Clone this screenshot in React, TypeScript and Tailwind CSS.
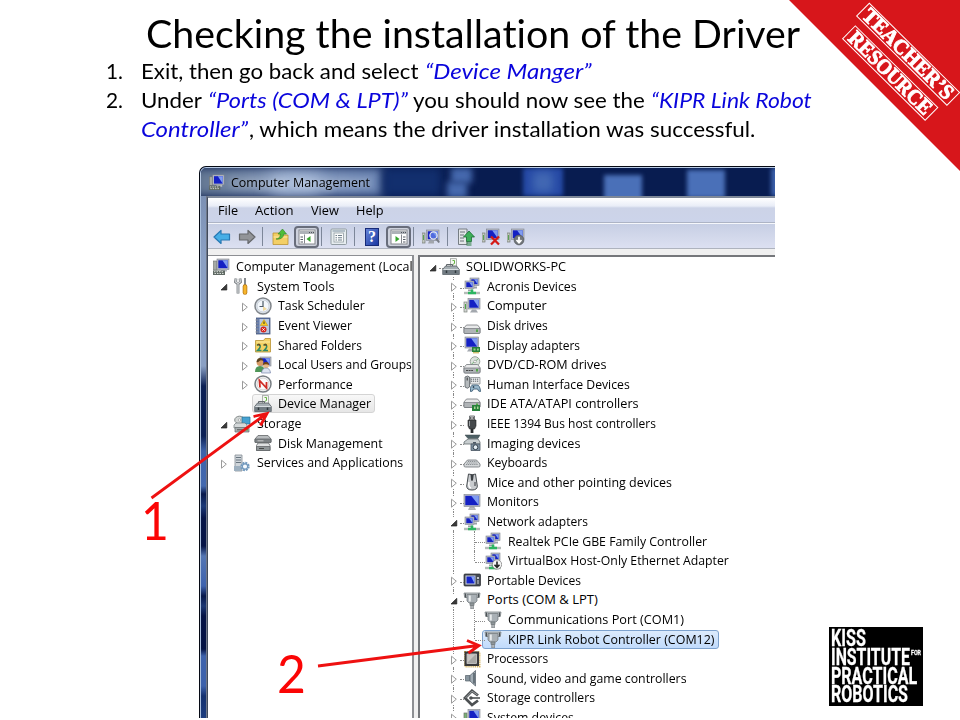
import React, { useLayoutEffect, useRef, useState } from "react";

/* Text squeezed or stretched horizontally so it occupies exactly `w` pixels. */
function Fit({ w, className = "", children }: { w: number; className?: string; children: React.ReactNode }) {
  const ref = useRef<HTMLSpanElement>(null);
  const [scale, setScale] = useState(1);
  useLayoutEffect(() => {
    if (ref.current) setScale(w / ref.current.offsetWidth);
  }, [w]);
  return (
    <span className={`inline-block shrink-0 ${className}`} style={{ width: w }}>
      <span ref={ref} className="inline-block origin-left whitespace-nowrap" style={{ transform: `scaleX(${scale})` }}>
        {children}
      </span>
    </span>
  );
}

/* ---------- icons, all on an 18x18 grid ---------- */

const Screen = ({ x, y, w, h }: { x: number; y: number; w: number; h: number }) => (
  <g>
    <rect x={x} y={y} width={w} height={h} fill="#b9bdc6" stroke="#7d828c" strokeWidth=".6" />
    <rect x={x + 1.3} y={y + 1.3} width={w - 2.6} height={h - 2.6} fill="#1420c4" />
    <path d={`M${x + w - 1.3} ${y + 1.3}V${y + h - 1.3}L${x + w * 0.45} ${y + 1.3}Z`} fill="#7f9cf0" />
  </g>
);

const Port = () => (
  <g stroke="#6f7579" strokeWidth=".7">
    <path d="M1 2h16l-.7 4.500H1.700Z" fill="#c3c8cb" />
    <path d="M4 3.500h10v6.500l-2 2H6l-2-2Z" fill="#a9b0b5" />
    <path d="M5.800 4.500h2v6h-2Z" fill="#e8ebec" stroke="none" />
    <path d="M7 12h4v2.500H7Z" fill="#8e9599" />
    <path d="M7.800 14.500h2.600V18H7.800Z" fill="#b8bdc0" />
    <path d="M2.500 2.500v4M15.500 2.500v4" stroke="#4c5256" strokeWidth="1.200" />
  </g>
);

const Net = () => (
  <g>
    <Screen x={7} y={1} w={9} h={7.5} />
    <Screen x={2} y={4} w={9} h={7.5} />
    <path d="M5 12.500h5v1.500H5ZM11 9.500h3v2h-3Z" fill="#9ba0a8" />
    <path d="M1 16h16" stroke="#b5bcb8" strokeWidth="2.400" />
    <path d="M5 16h8M9 12.500V16" stroke="#2cb561" strokeWidth="2.600" />
  </g>
);

const DiskBody = ({ y = 8 }: { y?: number }) => (
  <g>
    <path d={`M1 ${y + 3}l2.500-3h11l2.500 3v4.500q0 1-1 1H2q-1 0-1-1Z`} fill="#e8e9ea" stroke="#73777b" strokeWidth=".8" />
    <path d={`M1 ${y + 3.5}h16v4q0 1-1 1H2q-1 0-1-1Z`} fill="#b0b4b7" stroke="#73777b" strokeWidth=".7" />
    <rect x="13" y={y + 4.5} width="2" height="2.500" fill="#52a846" />
  </g>
);

const DevMgr = () => (
  <g>
    <rect x="8.500" y=".7" width="6" height="9" fill="#f5f7f3" stroke="#8d938e" strokeWidth=".7" />
    <path d="M10.500 2.500h2v3l-2 1" stroke="#65b343" fill="none" />
    <path d="M4.500 8.500V6.500h6v2" stroke="#62686c" fill="none" />
    <path d="M.7 11.500l2.800-3.500h11l2.800 3.500v5H.7Z" fill="#a5adb2" stroke="#555d63" strokeWidth=".8" />
    <path d="M1 12h16v4.200H1Z" fill="#727c83" />
    <path d="M1.500 11.500h15" stroke="#d9dee1" />
    <path d="M4.500 12.500v2.500M13.500 12.500v2.500" stroke="#30383d" strokeWidth="1.500" />
  </g>
);

const Mgmt = () => (
  <g>
    <rect x="1.500" y="3" width="3.500" height="9" fill="#a5aaa5" stroke="#6b6f6b" strokeWidth=".6" />
    <Screen x={5} y={1} w={12} h={10.5} />
    <path d="M9 11.500h6v2H9Z" fill="#b5b9bf" />
    <path d="M1 12.500h12v4.500H1Z" fill="#5f6963" />
    <path d="M2 13.700h10M2.500 15.500h9" stroke="#d6dbd6" strokeDasharray="1.500 1" />
  </g>
);

const ICONS: Record<string, React.ReactNode> = {
  mgmt: <Mgmt />,
  devmgr: <DevMgr />,
  net: <Net />,
  netoff: (
    <g>
      <Net />
      <circle cx="13" cy="12.500" r="4.700" fill="#f4f4f4" stroke="#777" strokeWidth=".7" />
      <path d="M13 9.500v5.500M10.500 12.800l2.500 2.500 2.500-2.500" stroke="#222" strokeWidth="1.600" fill="none" />
    </g>
  ),
  port: <Port />,
  tools: (
    <g fill="none">
      <path d="M3 1.500L2.500 5l2.500 2 2.500-2L7 1.500M5 7v9.500" stroke="#777c80" strokeWidth="2.800" />
      <path d="M3 1.800L2.700 5 5 6.500 7.300 5 7 1.800M5 7v9" stroke="#d9dcde" strokeWidth="1.200" />
      <path d="M12 1v8" stroke="#85898d" strokeWidth="2" />
      <path d="M12 9.500v6" stroke="#b87812" strokeWidth="4.600" strokeLinecap="round" />
      <path d="M12 9.500v6" stroke="#f6b52c" strokeWidth="3" strokeLinecap="round" />
    </g>
  ),
  clock: (
    <g>
      <circle cx="9" cy="9" r="8" fill="#dfe6ee" stroke="#80858a" strokeWidth="1.500" />
      <circle cx="9" cy="9" r="6" fill="#f3f7fb" stroke="#b9c0c8" strokeWidth=".6" />
      <path d="M9 9v5l4-2Z" fill="#efd9a0" />
      <path d="M9 4v5.500H5.500" stroke="#4e5a66" fill="none" strokeWidth="1.200" />
    </g>
  ),
  event: (
    <g>
      <rect x="2.500" y="1" width="13.500" height="16" fill="#6079ab" stroke="#46587e" strokeWidth=".8" />
      <rect x="5.500" y="2" width="9.500" height="14" fill="#bac8df" />
      <path d="M1.500 3h3M1.500 6h3M1.500 9h3M1.500 12h3M1.500 15h3" stroke="#8d929b" strokeWidth="1.200" />
      <path d="M10 2.500l3.800 6H6.200Z" fill="#f9cc1d" stroke="#b98d10" strokeWidth=".5" />
      <path d="M10 4.500v2.500" stroke="#333" />
      <circle cx="9.500" cy="12.500" r="3" fill="#d6261e" />
      <path d="M8.300 11.300l2.400 2.400M10.700 11.300l-2.400 2.400" stroke="#fff" strokeWidth=".9" />
    </g>
  ),
  shared: (
    <g>
      <path d="M1.500 4.500h8l1.500-2h5.500V16h-15Z" fill="#f5d163" stroke="#b99234" strokeWidth=".8" />
      <path d="M2.500 6h13.500" stroke="#fbeaa4" />
      <g fill="none" strokeWidth="1.500">
        <path d="M3 9.500q2-2 3 0t-2.500 5H7.500M9.500 9.500q2-2 3 0t-2.500 5h4" stroke="#2d8a68" />
        <path d="M3.500 8.800q2-1 2.500 1M10 8.800q2-1 2.500 1" stroke="#6c4b1e" />
      </g>
    </g>
  ),
  users: (
    <g>
      <Screen x={6} y={1} w={11} h={9} />
      <circle cx="6" cy="6.500" r="3.400" fill="#d79b66" />
      <path d="M2.500 6q.5-4 3.500-4t3.500 3q-3-1.500-4 0T2.500 6Z" fill="#59401f" />
      <path d="M1 16q0-6 5-6t5 6Z" fill="#4f9658" />
      <circle cx="12" cy="9.500" r="2.800" fill="#eab98a" />
      <path d="M9 9q0-3 3-3t3 3q-3-1.500-6 0Z" fill="#75450e" />
      <path d="M7.500 17q.5-5 4.500-5t4.500 5Z" fill="#dce3f0" stroke="#6576a0" strokeWidth=".6" />
    </g>
  ),
  perf: (
    <g fill="none">
      <circle cx="9" cy="9" r="8" fill="#fafafa" stroke="#777d82" strokeWidth="1.500" />
      <circle cx="9" cy="9" r="6" stroke="#d2d2d2" />
      <path d="M6 12.500L5.500 5.500 12.500 13V7" stroke="#cf2c24" strokeWidth="1.800" />
    </g>
  ),
  storage: (
    <g>
      <ellipse cx="6.500" cy="5" rx="4.800" ry="3.800" fill="#d2d6d5" stroke="#858b8b" />
      <circle cx="6.500" cy="5" r="1.200" fill="#fff" stroke="#8a8f90" strokeWidth=".6" />
      <path d="M9 2h8v7H9Z" fill="#46a2d2" stroke="#2a7193" strokeWidth=".7" />
      <path d="M1 10l2-2h9l2 2v3H1Z" fill="#d5d9da" stroke="#6f7779" strokeWidth=".7" />
      <path d="M2 12.500h14V17H2Z" fill="#a7aeb0" stroke="#666d70" strokeWidth=".7" />
      <path d="M4 14.800h6" stroke="#555" />
      <path d="M13 14h2v1.600h-2Z" fill="#4cb140" />
    </g>
  ),
  diskmgmt: (
    <g stroke="#63676a" strokeWidth=".8">
      <path d="M1 5l3-3.500h10L17 5v3H1Z" fill="#b8bcbe" />
      <path d="M1 5h16v3.500H1Z" fill="#7d8285" />
      <path d="M2.500 11.500l1.500-2.500h10.500l1.500 2.500V16.500h-13.500Z" fill="#dfe1e2" />
      <path d="M2.500 12.500h13.500v4h-13.500Z" fill="#909698" />
      <path d="M5 14.500h5" stroke="#333" />
      <path d="M3.500 6.800h6" stroke="#ddd" />
    </g>
  ),
  services: (
    <g>
      <path d="M2 1h7v16H2Z" fill="#cfd5da" stroke="#868d94" strokeWidth=".8" />
      <path d="M3 3.500h5M3 6h5M3 8.500h5" stroke="#68757f" strokeWidth="1.200" />
      <path d="M1 12h7v5H1Z" fill="#9eb0bf" />
      <circle cx="12" cy="12.500" r="3.600" fill="#dce9f4" stroke="#7299be" strokeWidth="2.200" strokeDasharray="1.900 .9" />
      <circle cx="12" cy="12.500" r="2.600" fill="#f5fafe" stroke="#7299be" strokeWidth="1.100" />
    </g>
  ),
  computer: (
    <g>
      <rect x="1" y="5" width="3" height="10" fill="#d3d6d3" stroke="#7c827c" strokeWidth=".7" />
      <path d="M2.500 7v5" stroke="#4ea549" />
      <Screen x={5} y={1.5} w={12} h={10.5} />
      <path d="M9 12.500h4l2 3H7Z" fill="#a3a8ae" />
    </g>
  ),
  disk: <DiskBody y={8} />,
  display: (
    <g>
      <Screen x={2} y={1} w={13.5} h={11} />
      <path d="M6 12.500h4l1 3H4Z" fill="#a4a9b0" />
      <rect x="9" y="11" width="8" height="5" fill="#26813a" />
      <path d="M10.500 12.500h2v2h-2ZM14 12.500h1.800v2H14Z" fill="#9acb88" />
      <path d="M10 16.800h6" stroke="#bfa637" />
    </g>
  ),
  dvd: (
    <g>
      <circle cx="12" cy="5.500" r="4.800" fill="#dce4dd" stroke="#868d88" strokeWidth=".8" />
      <path d="M12 5.500l3.500-3M12 5.500L8.500 8" stroke="#7ab87e" />
      <circle cx="12" cy="5.500" r="1.300" fill="#fff" stroke="#888" strokeWidth=".6" />
      <DiskBody y={8.5} />
      <path d="M3 14.500h7" stroke="#444" strokeDasharray="2 .6" />
    </g>
  ),
  hid: (
    <g>
      <path d="M2 2q3-2 4.500 0v10q-2 2.500-4.500 0Z" fill="#b5babd" stroke="#596065" strokeWidth=".8" />
      <path d="M4.200 2.500v3" stroke="#333" />
      <path d="M7.500 2.500h9.500v6.500h-9.500Z" fill="#e8eaeb" stroke="#7b8184" strokeWidth=".7" />
      <path d="M8 4.200h8M8 6.200h8" stroke="#565c60" strokeDasharray="1.200 .8" />
      <path d="M7.500 16.500q-.5-7 3-6.500h3q3.500-.5 4 6.500-2 .5-3-2.500h-4q-1 3-3 2.500Z" fill="#98b7cb" stroke="#3e5f77" strokeWidth=".9" />
      <path d="M9.500 12h2M10.500 11v2" stroke="#234" strokeWidth=".7" />
    </g>
  ),
  ide: (
    <g>
      <DiskBody y={4} />
      <rect x="9" y="10" width="8" height="6" fill="#26813a" />
      <path d="M11 11.500h1.500v2.500H11ZM14 11.500h1.500v2.500H14Z" fill="#a5d294" />
    </g>
  ),
  ieee: (
    <g>
      <path d="M6.500 1h5v4h-5Z" fill="#d9dbdc" stroke="#55595c" strokeWidth=".8" />
      <path d="M7.800 2v2M10.200 2v2" stroke="#333" />
      <path d="M5 5h8v6l-1.500 3h-5L5 11Z" fill="#45494c" stroke="#222" strokeWidth=".6" />
      <path d="M6.500 6v5" stroke="#9ba0a3" />
      <path d="M9 14v4" stroke="#282b2d" strokeWidth="2.800" />
    </g>
  ),
  imaging: (
    <g>
      <path d="M2 1h15l-2 3.500H5Z" fill="#4d6065" stroke="#39474b" strokeWidth=".5" />
      <path d="M1 8l4-3h10l2 3v2H1Z" fill="#c8ced0" stroke="#636c70" strokeWidth=".8" />
      <path d="M8 10h9v6.500H8Z" fill="#8194a4" stroke="#46535f" strokeWidth=".8" />
      <circle cx="12.500" cy="13.200" r="2.400" fill="#e5eff5" stroke="#33404b" />
      <path d="M10 8.800h3" stroke="#46535f" strokeWidth="1.500" />
    </g>
  ),
  keyboard: (
    <g>
      <path d="M4.500 6h9L17 10v2q0 1-1.500 1h-13Q1 13 1 12v-2Z" fill="#d5d8da" stroke="#6d7276" strokeWidth=".8" />
      <path d="M5 7.500h8.500M3.800 9h10.500M3 10.500h12" stroke="#777d82" strokeWidth=".8" strokeDasharray="1.200 .7" />
    </g>
  ),
  mouse: (
    <g>
      <path d="M5.500 1q4 1.500 7 0l1.800 12q0 4-5.300 4t-5.300-4Z" fill="#c9cccf" stroke="#474c50" />
      <path d="M7.500 1.500L8 7q1 2 2 0l.8-5.500Z" fill="#3c4145" />
      <path d="M6 9q-1 5 2 6" stroke="#fff" fill="none" strokeWidth="1.500" />
      <path d="M12 9v4" stroke="#65696c" strokeWidth="1.500" />
    </g>
  ),
  monitor: (
    <g>
      <Screen x={1} y={1.5} w={16} h={12} />
      <path d="M7 14h4l1.500 2.500h-7Z" fill="#b9bcc1" stroke="#888" strokeWidth=".5" />
    </g>
  ),
  portable: (
    <g>
      <rect x="1" y="3" width="16.500" height="12" rx="1" fill="#454b54" stroke="#25282d" strokeWidth=".7" />
      <rect x="3" y="5" width="9" height="8" fill="#1424c8" stroke="#ccd2d9" />
      <path d="M8 5.500h3.500v7Z" fill="#83a2f1" />
      <circle cx="15" cy="7" r="1.100" fill="#e2e6ea" />
      <path d="M14 10h2M14 12h2" stroke="#d1d5d9" />
    </g>
  ),
  cpu: (
    <g>
      <rect x="2" y="2" width="14.500" height="14.500" fill="none" stroke="#d4b25d" strokeWidth="2" strokeDasharray="1.100 .8" />
      <rect x="1.500" y="1.500" width="14.500" height="14.500" fill="#38383a" />
      <rect x="4" y="4" width="9.500" height="9.500" fill="#a8a7a4" stroke="#ddd" strokeWidth=".7" />
      <path d="M4.500 4.500h8l-8 8Z" fill="#c8c6c3" />
    </g>
  ),
  sound: (
    <g>
      <path d="M2.500 6.500h4.500v5.500H2.500Z" fill="#88959e" stroke="#56616a" strokeWidth=".7" />
      <path d="M7 6.500L12.500 1.500v15.500L7 12Z" fill="#a2adb5" stroke="#5c666e" strokeWidth=".8" />
      <path d="M11 4v10.500" stroke="#59656d" strokeWidth="1.600" />
    </g>
  ),
  storctl: (
    <g fill="none">
      <path d="M15 6.500L9 1.800 2 9l7 7 6-4.500" stroke="#4c5052" strokeWidth="2.800" />
      <path d="M14.500 6L9 2.200 2.500 9" stroke="#a3a7a9" strokeWidth=".9" />
      <path d="M6.500 9h10.500" stroke="#4c5052" strokeWidth="1.600" />
      <circle cx="8" cy="9" r="1.700" fill="#4c5052" />
    </g>
  ),
  system: (
    <g>
      <rect x="1" y="5" width="3" height="10" fill="#7bb276" stroke="#6b716b" strokeWidth=".7" />
      <Screen x={5} y={1.5} w={12} h={10.5} />
    </g>
  ),
  back: (
    <path d="M1 9l7-6.500v3.500h8.500v6H8V15.500Z" fill="#46aee6" stroke="#2678b4" strokeWidth="1.200" strokeLinejoin="round" />
  ),
  forward: (
    <path d="M17 9l-7-6.500v3.500H1.500v6H10V15.500Z" fill="#929498" stroke="#66686c" strokeWidth="1.200" strokeLinejoin="round" />
  ),
  folderup: (
    <g>
      <path d="M2 5h6l1.500 2H17v9.500H2Z" fill="#f3cf65" stroke="#bb9333" strokeWidth=".8" />
      <path d="M2.500 9h14" stroke="#fbe9a5" />
      <path d="M5 11q4 0 4.500-5H7l4.500-5 4 5h-2.700Q12 12 5 11Z" fill="#4fbd39" stroke="#2d8321" strokeWidth=".6" />
    </g>
  ),
  paneleft: (
    <g>
      <rect x="1" y="2" width="16" height="14" fill="#fff" stroke="#85888e" />
      <path d="M1.500 4.500h15" stroke="#aeb2b8" strokeWidth="3" />
      <path d="M11 4.500h5" stroke="#4d5259" strokeDasharray="1 1" />
      <path d="M6.500 6.500v9" stroke="#85888e" />
      <path d="M2.500 9h2.500M2.500 11.500h2.500M2.500 14h2.500" stroke="#555b64" />
      <path d="M12.500 8v6L8.500 11Z" fill="#36a42d" />
    </g>
  ),
  paneright: (
    <g>
      <rect x="1" y="2" width="16" height="14" fill="#fff" stroke="#85888e" />
      <path d="M1.500 4.500h15" stroke="#aeb2b8" strokeWidth="3" />
      <path d="M11 4.500h5" stroke="#4d5259" strokeDasharray="1 1" />
      <path d="M11.500 6.500v9" stroke="#85888e" />
      <path d="M13 9h2.500M13 11.500h2.500M13 14h2.500" stroke="#555b64" />
      <path d="M5.500 8v6L9.500 11Z" fill="#36a42d" />
    </g>
  ),
  props: (
    <g>
      <rect x="1" y="1" width="15.500" height="15.500" rx="1" fill="#e6ecef" stroke="#929da3" />
      <path d="M2.500 3h12.500" stroke="#b2bfc8" strokeWidth="2" />
      <rect x="4" y="5" width="9.500" height="9" fill="#fbfcfc" stroke="#929da3" strokeWidth=".8" />
      <path d="M5.500 7.500h1.500M8 7.500h4M5.500 9.700h1.500M8 9.700h4M5.500 12h1.500M8 12h4" stroke="#6f7f8a" strokeWidth="1.100" />
    </g>
  ),
  scan: (
    <g>
      <rect x="0" y="5" width="3" height="10" fill="#c2c8c1" stroke="#747a73" strokeWidth=".7" />
      <path d="M1.500 7v5" stroke="#5aa255" />
      <Screen x={4.5} y={2} w={12.5} h={10.5} />
      <path d="M7 13h5v2.500H6Z" fill="#a2a6ac" />
      <circle cx="11.500" cy="7.500" r="3.600" fill="#6f92ecaa" stroke="#e2e7ef" strokeWidth="1.300" />
      <path d="M14 10.500l3.200 4" stroke="#777c85" strokeWidth="2" />
    </g>
  ),
  update: (
    <g>
      <path d="M1.500 1h8.500v15.500h-8.500Z" fill="#e3e6e8" stroke="#6b7378" strokeWidth=".9" />
      <path d="M3 4h5M3 7h4M3 10h4M3 13h4" stroke="#6b7378" />
      <path d="M12 3L17.500 9h-3v4.500H9.500V9h-3Z" fill="#3dae58" stroke="#1b6d34" strokeWidth=".8" />
      <path d="M9.500 15h5M9.500 17h5" stroke="#257b3a" strokeWidth="1.200" />
    </g>
  ),
  remove: (
    <g>
      <rect x="0" y="5" width="3" height="9" fill="#c2c8c1" stroke="#747a73" strokeWidth=".7" />
      <path d="M1.500 7v5" stroke="#5aa255" />
      <Screen x={4.5} y={1} w={12.5} h={10.5} />
      <path d="M9 8.500l8 8M17 8.500l-8 8" stroke="#d51a16" strokeWidth="2.300" />
    </g>
  ),
  disable: (
    <g>
      <rect x="0" y="5" width="3" height="9" fill="#c2c8c1" stroke="#747a73" strokeWidth=".7" />
      <path d="M1.500 7v5" stroke="#5aa255" />
      <Screen x={4.5} y={1} w={12.5} h={10.5} />
      <circle cx="12" cy="12" r="4.900" fill="#73777b" stroke="#55595c" strokeWidth=".7" />
      <path d="M12 8.800v5M9.500 12l2.500 2.700 2.500-2.700" stroke="#fff" strokeWidth="1.700" fill="none" />
    </g>
  ),
};

const Icon = ({ name, className = "size-[18px]" }: { name: string; className?: string }) => (
  <svg viewBox="0 0 18 18" className={`shrink-0 ${className}`}>
    {ICONS[name]}
  </svg>
);

const Twisty = ({ open }: { open: boolean }) => (
  <svg viewBox="0 0 8 12" className="relative h-[12px] w-[8px] bg-white">
    {open ? (
      <path d="M6.800 3.300V9H1Z" fill="#3a3a3a" stroke="#222" strokeWidth=".7" />
    ) : (
      <path d="M1.500 2.200v8L6.300 6.200Z" fill="#fff" stroke="#9a9a9a" />
    )}
  </svg>
);

/* ---------- trees ---------- */

type Row = { label: string; w: number; icon: string; level: number; state?: "open" | "closed"; mark?: "hover" | "selected" };

const leftRows: Row[] = [
  { label: "Computer Management (Local", w: 177, icon: "mgmt", level: 0 },
  { label: "System Tools", w: 77, icon: "tools", level: 1, state: "open" },
  { label: "Task Scheduler", w: 86.5, icon: "clock", level: 2, state: "closed" },
  { label: "Event Viewer", w: 74, icon: "event", level: 2, state: "closed" },
  { label: "Shared Folders", w: 84, icon: "shared", level: 2, state: "closed" },
  { label: "Local Users and Groups", w: 134, icon: "users", level: 2, state: "closed" },
  { label: "Performance", w: 75, icon: "perf", level: 2, state: "closed" },
  { label: "Device Manager", w: 93, icon: "devmgr", level: 2, mark: "hover" },
  { label: "Storage", w: 44, icon: "storage", level: 1, state: "open" },
  { label: "Disk Management", w: 105, icon: "diskmgmt", level: 2 },
  { label: "Services and Applications", w: 146, icon: "services", level: 1, state: "closed" },
];

const rightRows: Row[] = [
  { label: "SOLIDWORKS-PC", w: 100.5, icon: "devmgr", level: 0, state: "open" },
  { label: "Acronis Devices", w: 90, icon: "net", level: 1, state: "closed" },
  { label: "Computer", w: 59.5, icon: "computer", level: 1, state: "closed" },
  { label: "Disk drives", w: 61, icon: "disk", level: 1, state: "closed" },
  { label: "Display adapters", w: 93, icon: "display", level: 1, state: "closed" },
  { label: "DVD/CD-ROM drives", w: 119.5, icon: "dvd", level: 1, state: "closed" },
  { label: "Human Interface Devices", w: 143, icon: "hid", level: 1, state: "closed" },
  { label: "IDE ATA/ATAPI controllers", w: 152, icon: "ide", level: 1, state: "closed" },
  { label: "IEEE 1394 Bus host controllers", w: 169, icon: "ieee", level: 1, state: "closed" },
  { label: "Imaging devices", w: 93, icon: "imaging", level: 1, state: "closed" },
  { label: "Keyboards", w: 60, icon: "keyboard", level: 1, state: "closed" },
  { label: "Mice and other pointing devices", w: 185, icon: "mouse", level: 1, state: "closed" },
  { label: "Monitors", w: 52, icon: "monitor", level: 1, state: "closed" },
  { label: "Network adapters", w: 101, icon: "net", level: 1, state: "open" },
  { label: "Realtek PCIe GBE Family Controller", w: 199, icon: "net", level: 2 },
  { label: "VirtualBox Host-Only Ethernet Adapter", w: 221, icon: "netoff", level: 2 },
  { label: "Portable Devices", w: 94, icon: "portable", level: 1, state: "closed" },
  { label: "Ports (COM & LPT)", w: 111, icon: "port", level: 1, state: "open" },
  { label: "Communications Port (COM1)", w: 176, icon: "port", level: 2 },
  { label: "KIPR Link Robot Controller (COM12)", w: 207, icon: "port", level: 2, mark: "selected" },
  { label: "Processors", w: 61, icon: "cpu", level: 1, state: "closed" },
  { label: "Sound, video and game controllers", w: 200, icon: "sound", level: 1, state: "closed" },
  { label: "Storage controllers", w: 108, icon: "storctl", level: 1, state: "closed" },
  { label: "System devices", w: 87, icon: "system", level: 1, state: "closed" },
];

/* One 21px indent column; `rail` continues the parent's dotted line through it. */
const Indent = ({ rail = false }: { rail?: boolean }) => (
  <span className="flex h-full w-[21px] shrink-0 pl-[10px]">
    {rail && <span className="h-full border-l border-dotted border-[#8a8a8a]" />}
  </span>
);

function TreeRow({ row, lined, next }: { row: Row; lined: boolean; next?: Row }) {
  const { level, state, mark } = row;
  const lastChild = level === 2 && next !== undefined && next.level < 2;
  return (
    <div className="flex h-[19.6px] shrink-0 items-center">
      {lined && level > 0 && <Indent />}
      {level === 2 && <Indent rail={lined} />}
      <span
        className={`relative flex h-full shrink-0 items-center justify-center ${
          level === 0 && !lined ? "w-0" : "w-[21px]"
        }`}
      >
        {lined && level > 0 && (
          <span
            className={`absolute left-[10px] top-0 border-l border-dotted border-[#8a8a8a] ${
              lastChild ? "h-1/2" : "h-full"
            }`}
          />
        )}
        {lined && (
          <span
            className={`absolute right-0 top-[11px] border-t border-dotted border-[#8a8a8a] ${
              level === 2 ? "w-[10px]" : "w-[4px]"
            }`}
          />
        )}
        {state && (
          <span className="relative top-px flex py-px">
            <Twisty open={state === "open"} />
          </span>
        )}
      </span>
      <span
        className={`-ml-[3px] flex h-[19px] items-center rounded-[3px] border pl-px pr-[3px] ${
          mark === "hover"
            ? "border-[#d4d4d4] bg-linear-to-b from-[#f8f8f8] to-[#e6e6e6]"
            : mark === "selected"
              ? "border-[#7da2ce] bg-linear-to-b from-[#dcebfc] to-[#c1dbfc]"
              : "border-transparent"
        }`}
      >
        <Icon name={row.icon} />
        <Fit w={row.w} className="ml-[6px]">
          {row.label}
        </Fit>
      </span>
    </div>
  );
}

/* ---------- window chrome ---------- */

const Sep = ({ className }: { className: string }) => (
  <span className={`flex shrink-0 justify-center ${className}`}>
    <span className="h-[19px] w-px bg-[#7d8799]" />
  </span>
);

const Tool = ({ name, className }: { name: string; className: string }) => (
  <span className={`flex shrink-0 items-center justify-center ${className}`}>
    <Icon name={name} />
  </span>
);

const Toggled = ({ name }: { name: string }) => (
  <span className="flex h-[22px] w-[25px] shrink-0 items-center justify-center rounded-[4px] border-2 border-[#686d7b] bg-[#cdd1dc]">
    <Icon name={name} />
  </span>
);

function ManagementWindow() {
  return (
    <section className="flex h-[552px] w-[576px] flex-col overflow-hidden rounded-tl-[7px] border-l border-t border-[#060a14] bg-[#5b76a9] font-['Open_Sans','Noto_Sans',sans-serif] text-[13px] leading-[19px] text-black">
      {/* glass caption with the wallpaper showing through */}
      <header className="relative flex h-[29px] shrink-0 items-center overflow-hidden rounded-tl-[6px] border-l border-t border-[#b9cbe5] bg-[#081c50] pl-[7px]">
        <span className="absolute -left-2 top-0 h-full w-[190px] bg-linear-to-r from-[#60748f] via-[#8b9fc0] to-[#6d87b5] blur-[5px]" />
        <span className="absolute left-[70px] top-2 h-4 w-[50px] bg-[#adc0df] blur-[8px]" />
        <span className="absolute left-[182px] top-0 h-full w-[58px] bg-[#122f6e] blur-[5px]" />
        <span className="absolute left-[250px] top-0 h-[15px] w-[21px] bg-[#4669ae] blur-[3px]" />
        <span className="absolute left-[246px] top-[14px] h-[16px] w-[20px] bg-[#4669ae] blur-[3px]" />
        <span className="absolute left-[322px] top-0 h-full w-[40px] bg-[#2549a5] blur-[2px]" />
        <span className="absolute left-[332px] top-1 h-5 w-[20px] bg-[#4268b3] blur-[4px]" />
        <span className="absolute left-[403px] top-[7px] h-full w-[38px] bg-[#4a70b8] blur-[2px]" />
        <span className="absolute left-[486px] top-[2px] h-full w-[38px] bg-[#4a70b8] blur-[2px]" />
        <span className="absolute left-[570px] top-0 h-full w-[12px] bg-[#3c61ac] blur-[2px]" />
        <span className="relative flex items-center">
          <Icon name="mgmt" className="size-[17px]" />
          <Fit w={139} className="ml-[6px] [text-shadow:0_0_6px_#ffffffb0]">
            Computer Management
          </Fit>
        </span>
      </header>
      <div className="flex min-h-0 grow">
        <div className="w-[7px] shrink-0 border-x border-l-[#a9bedb] border-r-[#6f7889] bg-[linear-gradient(to_bottom,#7b90b4_0px,#8ba0c3_60px,#8aa0c4_170px,#0b2055_190px,#0b2055_240px,#3e63aa_255px,#4369af_290px,#08194b_298px,#1b3978_310px,#051447_322px,#051447_350px,#5476b3_360px,#3d62ae_390px,#06174a_400px,#1b3773_410px,#041345_420px,#041345_453px,#3d62ac_460px,#3d62ac_490px,#13306f_500px,#1c3c7e_522px)]" />
        <div className="flex min-w-0 grow flex-col border-l border-t-2 border-[#404a5c] border-t-[#7e8898] bg-[#f0f0f0]">
          <nav className="flex h-[25px] shrink-0 items-center border-b border-[#adb4c5] bg-[linear-gradient(to_bottom,#fff_0,#e9edf7_8px,#ccd3e7_10px,#ccd4ea_24px)] pl-[10px]">
            <Fit w={20.5}>File</Fit>
            <Fit w={38.5} className="ml-[16.5px]">Action</Fit>
            <Fit w={27.5} className="ml-[17.5px]">View</Fit>
            <Fit w={27.5} className="ml-[17px]">Help</Fit>
          </nav>
          <div className="flex h-[26px] shrink-0 items-center border-b border-t border-b-[#aeb3be] border-t-[#f5f7fb] bg-linear-to-b from-[#c7cfe4] to-[#dce0f1] pt-px">
            <Tool name="back" className="w-[28px]" />
            <Tool name="forward" className="w-[22px]" />
            <Sep className="w-[8px]" />
            <Tool name="folderup" className="w-[28px]" />
            <Toggled name="paneleft" />
            <Sep className="w-[5px]" />
            <Tool name="props" className="w-[30px]" />
            <Sep className="w-px" />
            <span className="flex w-[31px] shrink-0 justify-center pl-[3px]">
              <span className="flex h-[18px] w-[14px] items-center justify-center border border-[#172b78] bg-linear-to-br from-[#6783d6] to-[#1b37a3] font-['Liberation_Serif',serif] text-[16px] font-bold text-white">
                ?
              </span>
            </span>
            <Toggled name="paneright" />
            <Sep className="w-[5px]" />
            <Tool name="scan" className="w-[30px]" />
            <Sep className="w-[3px]" />
            <Tool name="update" className="w-[33px]" />
            <Tool name="remove" className="w-[18px]" />
            <Tool name="disable" className="w-[32px]" />
          </div>
          <div className="flex min-h-0 grow pt-[6px]">
            <div className="flex w-[206px] shrink-0 flex-col overflow-hidden border-r-2 border-t border-[#8d8f93] bg-white pl-[5px] pt-px">
              {leftRows.map((row) => (
                <TreeRow key={row.label} row={row} lined={false} />
              ))}
            </div>
            <div className="ml-[4px] flex min-w-0 grow flex-col overflow-hidden border-l-2 border-t-2 border-[#75777b] bg-white pl-[2px]">
              {rightRows.map((row, i) => (
                <TreeRow key={row.label} row={row} lined next={rightRows[i + 1]} />
              ))}
            </div>
          </div>
        </div>
      </div>
    </section>
  );
}

/* ---------- slide decorations ---------- */

const Stamp = ({ w, children }: { w: number; children: string }) => (
  <span className="flex h-[19px] items-center border border-white px-[3px] font-['Liberation_Serif',serif] text-[21px] font-bold leading-[19px] text-white [-webkit-text-stroke:0.9px_white]">
    <Fit w={w}>{children}</Fit>
  </span>
);

function Ribbon() {
  return (
    <div className="absolute right-0 top-0 h-[171px] w-[171px]">
      <div className="absolute inset-0 bg-[#d7161b] [clip-path:polygon(0_0,100%_0,100%_100%)]" />
      <div className="absolute left-[45.6px] top-[41px] flex h-[45px] w-[128px] rotate-[44.7deg] flex-col items-center justify-between">
        <Stamp w={120}>TEACHER’S</Stamp>
        <Stamp w={109}>RESOURCE</Stamp>
      </div>
    </div>
  );
}

function KissLogo() {
  return (
    <div className="absolute left-[829px] top-[627px] flex h-[79px] w-[94px] flex-col bg-black pl-[2px] pt-[2px] font-['Roboto',sans-serif] text-[23.5px] font-bold leading-[18.8px] text-white [-webkit-text-stroke:0.3px_white]">
      <Fit w={35}>KISS</Fit>
      <div className="flex items-start">
        <Fit w={79}>INSTITUTE</Fit>
        <Fit w={10} className="ml-px text-[8px] leading-[10px]">FOR</Fit>
      </div>
      <Fit w={86}>PRACTICAL</Fit>
      <Fit w={77}>ROBOTICS</Fit>
    </div>
  );
}

function Callouts() {
  return (
    <>
      <svg viewBox="0 0 960 720" className="pointer-events-none absolute inset-0 size-full" fill="none" stroke="#ee1111" strokeWidth="2.800">
        <path d="M151.500 498L266 414M253.500 416.500L267 413.500 260.500 425.500" />
        <path d="M318 666L478 645.500M467 640.500L479 645.500 468.500 653" />
      </svg>
      <span className="absolute left-[141px] top-[489px] text-[51.5px] leading-[62px] text-[#fb0505]">
        <Fit w={28}>1</Fit>
      </span>
      <span className="absolute left-[277px] top-[642px] text-[51.5px] leading-[62px] text-[#fb0505]">
        <Fit w={29}>2</Fit>
      </span>
    </>
  );
}

export default function App() {
  return (
    <main className="relative flex h-[720px] w-[960px] flex-col overflow-hidden bg-white font-['Lato','Open_Sans',sans-serif] text-black [font-variant-ligatures:none]">
      <h1 className="ml-[146px] mt-[10px] h-[47px] text-[38px] leading-[47px]">
        <Fit w={654}>Checking the installation of the Driver</Fit>
      </h1>
      <ol className="ml-[106px] flex h-[109px] flex-col text-[20.5px] leading-[29px]">
        <li className="flex">
          <Fit w={17.3}>1.</Fit>
          <Fit w={277.5} className="ml-[18.2px]">Exit, then go back and select</Fit>
          <Fit w={167} className="ml-[6px] italic text-[#0a05dc]">“Device Manger”</Fit>
        </li>
        <li className="flex">
          <Fit w={17.3}>2.</Fit>
          <div className="ml-[18.2px] flex flex-col">
            <div className="flex">
              <Fit w={61}>Under</Fit>
              <Fit w={199.5} className="ml-[6px] italic text-[#0a05dc]">“Ports (COM &amp; LPT)”</Fit>
              <Fit w={232} className="ml-[5px]">you should now see the</Fit>
              <Fit w={161} className="ml-[6px] italic text-[#0a05dc]">“KIPR Link Robot</Fit>
            </div>
            <div className="flex">
              <Fit w={107.5} className="italic text-[#0a05dc]">Controller”</Fit>
              <Fit w={506}>, which means the driver installation was successful.</Fit>
            </div>
          </div>
        </li>
      </ol>
      <div className="ml-[199px]">
        <ManagementWindow />
      </div>
      <Ribbon />
      <Callouts />
      <KissLogo />
    </main>
  );
}
